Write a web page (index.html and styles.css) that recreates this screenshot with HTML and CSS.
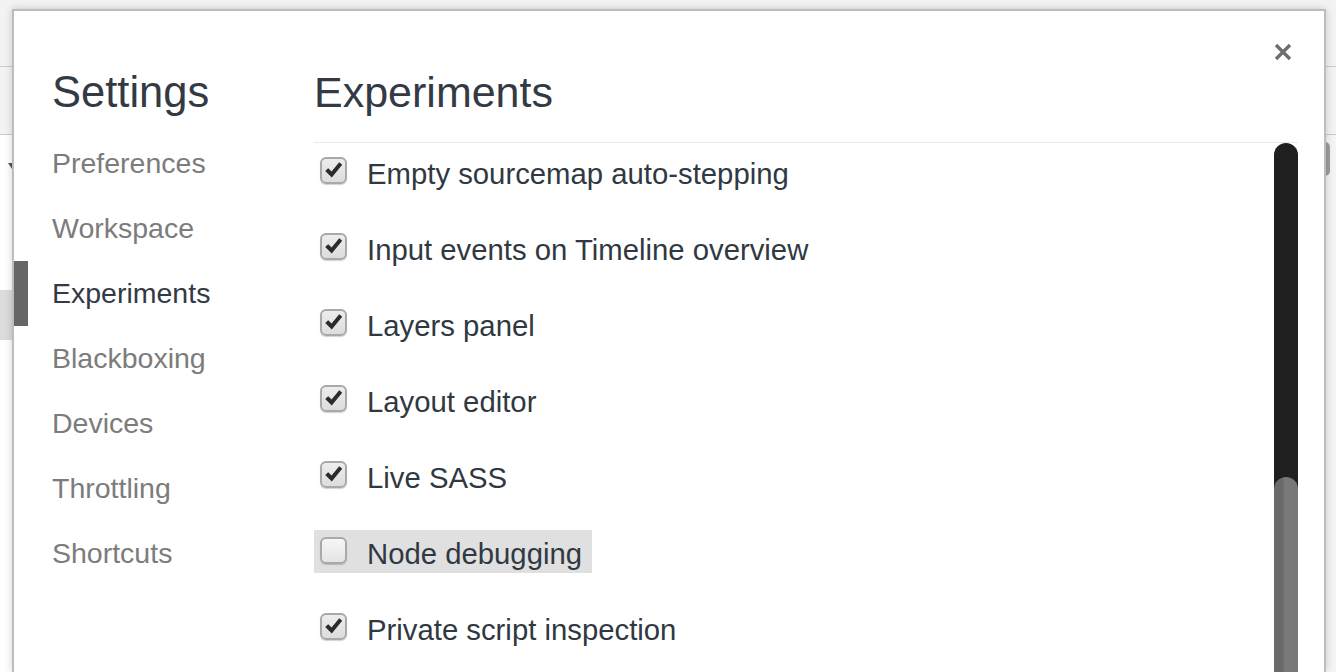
FILE: index.html
```html
<!DOCTYPE html>
<html>
<head>
<meta charset="utf-8">
<link rel="stylesheet" href="styles.css">
</head>
<body>
<div class="page">
  <div class="toolbar"></div>
  <div class="tabbar"></div>
  <div class="content">
    <div class="content-main">
      <div class="tree-row"><span class="tri"></span></div>
      <div class="sel-row"></div>
    </div>
    <div class="content-side"><div class="side-tab"></div></div>
  </div>
</div>

<div class="dialog">
  <div class="sidebar">
    <div class="side-title">Settings</div>
    <div class="nav">
      <div class="nav-item">Preferences</div>
      <div class="nav-item">Workspace</div>
      <div class="nav-item selected">Experiments</div>
      <div class="nav-item">Blackboxing</div>
      <div class="nav-item">Devices</div>
      <div class="nav-item">Throttling</div>
      <div class="nav-item">Shortcuts</div>
    </div>
  </div>
  <div class="main">
    <div class="main-title">Experiments</div>
    <div class="body">
      <div class="list">
        <label class="exp"><span class="cb checked"><svg viewBox="0 0 23 23" width="23" height="23"><path d="M3.2 12 L6.2 9.2 L9.6 12.6 L17.2 3.2 L20.2 5.8 L9.8 18.6 Z" fill="#2b2b2b"/></svg></span><span class="exp-text">Empty sourcemap auto-stepping</span></label>
        <label class="exp"><span class="cb checked"><svg viewBox="0 0 23 23" width="23" height="23"><path d="M3.2 12 L6.2 9.2 L9.6 12.6 L17.2 3.2 L20.2 5.8 L9.8 18.6 Z" fill="#2b2b2b"/></svg></span><span class="exp-text">Input events on Timeline overview</span></label>
        <label class="exp"><span class="cb checked"><svg viewBox="0 0 23 23" width="23" height="23"><path d="M3.2 12 L6.2 9.2 L9.6 12.6 L17.2 3.2 L20.2 5.8 L9.8 18.6 Z" fill="#2b2b2b"/></svg></span><span class="exp-text">Layers panel</span></label>
        <label class="exp"><span class="cb checked"><svg viewBox="0 0 23 23" width="23" height="23"><path d="M3.2 12 L6.2 9.2 L9.6 12.6 L17.2 3.2 L20.2 5.8 L9.8 18.6 Z" fill="#2b2b2b"/></svg></span><span class="exp-text">Layout editor</span></label>
        <label class="exp"><span class="cb checked"><svg viewBox="0 0 23 23" width="23" height="23"><path d="M3.2 12 L6.2 9.2 L9.6 12.6 L17.2 3.2 L20.2 5.8 L9.8 18.6 Z" fill="#2b2b2b"/></svg></span><span class="exp-text">Live SASS</span></label>
        <label class="exp hover"><span class="cb"></span><span class="exp-text">Node debugging</span></label>
        <label class="exp"><span class="cb checked"><svg viewBox="0 0 23 23" width="23" height="23"><path d="M3.2 12 L6.2 9.2 L9.6 12.6 L17.2 3.2 L20.2 5.8 L9.8 18.6 Z" fill="#2b2b2b"/></svg></span><span class="exp-text">Private script inspection</span></label>
      </div>
      <div class="scrollbar"><div class="thumb"></div></div>
    </div>
  </div>
  <div class="close" title="Close"><svg viewBox="0 0 18 18" width="18" height="18"><path d="M2 2 L16 16 M16 2 L2 16" stroke="#6e6e6e" stroke-width="3.4" stroke-linecap="butt"/></svg></div>
</div>
</body>
</html>
```

FILE: styles.css
```css
html, body {
  margin: 0;
  padding: 0;
}
body {
  width: 1336px;
  height: 672px;
  overflow: hidden;
  font-family: "Liberation Sans", Arial, sans-serif;
  position: relative;
  background: #f3f3f3;
}
.page {
  display: flex;
  flex-direction: column;
  height: 672px;
}
.toolbar {
  height: 66px;
  background: #f3f3f3;
  border-bottom: 1px solid #cacaca;
}
.tabbar {
  height: 67px;
  background: #f3f3f3;
  border-bottom: 1px solid #cacaca;
}
.content {
  flex: 1;
  display: flex;
}
.content-main {
  flex: 1;
  background: #ffffff;
  display: flex;
  flex-direction: column;
}
.tree-row {
  height: 20px;
  margin-top: 20px;
  padding-left: 8px;
}
.tri {
  display: inline-block;
  width: 0;
  height: 0;
  border-left: 4px solid transparent;
  border-right: 4px solid transparent;
  border-top: 6px solid #555;
  margin-top: 3px;
}
.sel-row {
  height: 50px;
  margin-top: 115px;
  background: #dcdcdc;
}
.content-side {
  width: 12px;
  background: #f4f4f4;
  padding-top: 7px;
}
.side-tab {
  height: 34px;
  width: 8px;
  margin-left: -2px;
  background: #9d9d9d;
  border-radius: 0 5px 5px 0;
}

.dialog {
  position: absolute;
  left: 12px;
  top: 9px;
  width: 1314px;
  height: 663px;
  box-sizing: border-box;
  background: #ffffff;
  border: 2px solid #bdbdbd;
  border-bottom: 0;
  box-shadow: 0 0 8px rgba(0, 0, 0, 0.18);
  display: flex;
  overflow: hidden;
}
.sidebar {
  width: 300px;
  flex: none;
  padding-top: 57px;
}
.side-title {
  font-size: 43.5px;
  line-height: 48px;
  color: #333a44;
  padding-left: 38px;
}
.nav {
  margin-top: 15px;
  display: flex;
  flex-direction: column;
}
.nav-item {
  height: 65px;
  line-height: 65px;
  font-size: 28.5px;
  color: #7c7c7c;
  border-left: 14px solid transparent;
  padding-left: 24px;
}
.nav-item.selected {
  color: #333a44;
  border-left-color: #666666;
}

.main {
  flex: 1;
  display: flex;
  flex-direction: column;
  padding-top: 57px;
  padding-right: 26px;
  min-width: 0;
}
.main-title {
  font-size: 43px;
  line-height: 48px;
  color: #333a44;
  padding-bottom: 26px;
  border-bottom: 1px solid #e8e8e8;
}
.body {
  flex: 1;
  display: flex;
  min-height: 0;
}
.list {
  flex: 1;
  padding-top: 7px;
  display: flex;
  flex-direction: column;
  align-items: flex-start;
}
.exp {
  display: flex;
  align-items: center;
  height: 43px;
  margin-bottom: 33px;
  padding: 0 10px 0 6px;
  gap: 20px;
  cursor: default;
  flex: none;
}
.exp.hover {
  background: #e0e0e0;
}
.exp-text {
  font-size: 29.3px;
  color: #303942;
  white-space: nowrap;
  padding-top: 5px;
}
.cb {
  width: 27px;
  height: 27px;
  box-sizing: border-box;
  border: 2px solid #a9a9a9;
  border-radius: 6px;
  background: linear-gradient(#f6f6f6, #e4e4e4);
  box-shadow: 0 1px 1px rgba(0, 0, 0, 0.18);
  display: flex;
  align-items: center;
  justify-content: center;
  margin-bottom: 3px;
  flex: none;
}
.cb.checked {
  background: linear-gradient(#ededed, #dcdcdc);
}
.cb svg {
  display: block;
}
.scrollbar {
  width: 24px;
  flex: none;
  background: #1f1f1f;
  border-radius: 12px 12px 0 0;
  display: flex;
  flex-direction: column;
}
.thumb {
  margin-top: 334px;
  flex: 1;
  border-radius: 12px 12px 0 0;
  background: linear-gradient(to right, #6a6a6a, #6a6a6a 35%, #7a7a7a 45%, #777777);
}
.close {
  position: absolute;
  top: 32px;
  right: 32px;
  width: 18px;
  height: 18px;
}
.close svg {
  display: block;
}
```
